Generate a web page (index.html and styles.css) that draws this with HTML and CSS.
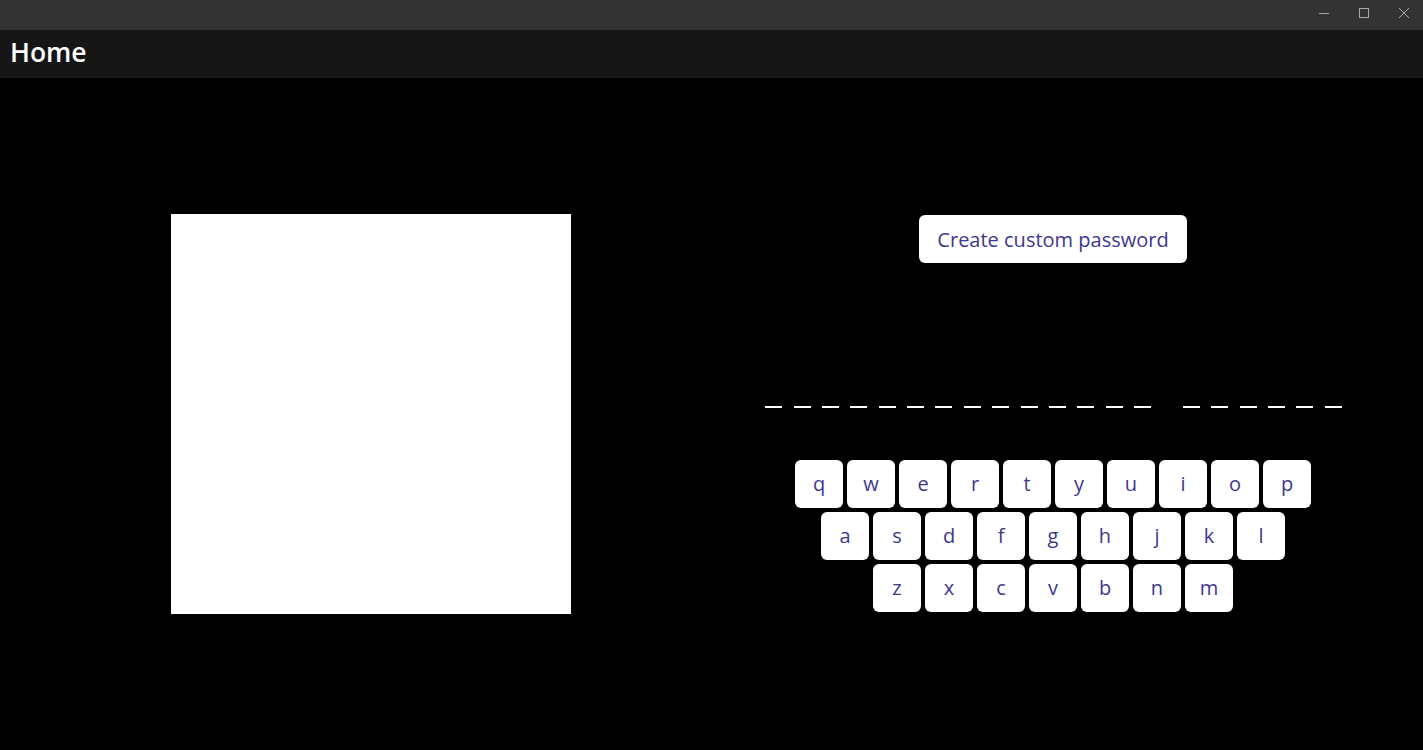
FILE: index.html
```html
<!DOCTYPE html>
<html>
<head>
<meta charset="utf-8">
<link rel="stylesheet" href="styles.css">
</head>
<body>
<div class="titlebar">
  <div class="controls">
    <span class="ctl"><svg width="12" height="12" viewBox="0 0 12 12"><path d="M1 6.5h10" stroke="#a8a8a8" stroke-width="1"/></svg></span>
    <span class="ctl"><svg width="12" height="12" viewBox="0 0 12 12"><rect x="1.5" y="1.5" width="9" height="9" fill="none" stroke="#a8a8a8" stroke-width="1"/></svg></span>
    <span class="ctl"><svg width="12" height="12" viewBox="0 0 12 12"><path d="M1 1l10 10M11 1L1 11" stroke="#a8a8a8" stroke-width="1"/></svg></span>
  </div>
</div>
<header class="header"><h1 class="title">Home</h1></header>
<main class="main">
  <section class="left">
    <div class="canvas"></div>
  </section>
  <section class="right">
    <button class="create">Create custom password</button>
    <div class="dashes">
      <div class="group">
        <span class="dash"></span><span class="dash"></span><span class="dash"></span><span class="dash"></span><span class="dash"></span><span class="dash"></span><span class="dash"></span><span class="dash"></span><span class="dash"></span><span class="dash"></span><span class="dash"></span><span class="dash"></span><span class="dash"></span><span class="dash"></span>
      </div>
      <div class="group">
        <span class="dash"></span><span class="dash"></span><span class="dash"></span><span class="dash"></span><span class="dash"></span><span class="dash"></span>
      </div>
    </div>
    <div class="keyboard">
      <div class="row">
        <button class="key">q</button><button class="key">w</button><button class="key">e</button><button class="key">r</button><button class="key">t</button><button class="key">y</button><button class="key">u</button><button class="key">i</button><button class="key">o</button><button class="key">p</button>
      </div>
      <div class="row">
        <button class="key">a</button><button class="key">s</button><button class="key">d</button><button class="key">f</button><button class="key">g</button><button class="key">h</button><button class="key">j</button><button class="key">k</button><button class="key">l</button>
      </div>
      <div class="row">
        <button class="key">z</button><button class="key">x</button><button class="key">c</button><button class="key">v</button><button class="key">b</button><button class="key">n</button><button class="key">m</button>
      </div>
    </div>
  </section>
</main>
</body>
</html>
```
FILE: styles.css
```css
* { box-sizing: border-box; }
html, body { margin: 0; padding: 0; }
body {
  background: #000;
  font-family: "Open Sans", "Liberation Sans", sans-serif;
  width: 1423px;
  height: 750px;
  overflow: hidden;
}
.titlebar {
  height: 30px;
  background: #333333;
  display: flex;
  justify-content: flex-end;
}
.controls {
  display: flex;
  margin-right: -1px;
}
.ctl {
  width: 40px;
  height: 26px;
  display: flex;
  align-items: center;
  justify-content: center;
}
.header {
  height: 48px;
  background: #161616;
  display: flex;
  align-items: center;
  padding-left: 10px;
}
.title {
  margin: 0;
  color: #fff;
  font-size: 26.5px;
  font-weight: 600;
  line-height: 1;
  padding-bottom: 4px;
}
.main {
  height: 672px;
  display: grid;
  grid-template-columns: 742px 622px;
}
.left {
  display: flex;
  align-items: center;
  justify-content: center;
}
.canvas {
  width: 400px;
  height: 400px;
  background: #fff;
}
.right {
  display: flex;
  flex-direction: column;
  align-items: center;
  justify-content: center;
  padding-bottom: 2px;
}
.create {
  height: 48px;
  padding: 2px 18px 0;
  border: none;
  border-radius: 6px;
  background: #fff;
  color: #3e3790;
  font-family: "Open Sans", sans-serif;
  font-size: 20px;
  line-height: 1;
  cursor: pointer;
}
.dashes {
  display: flex;
  gap: 32px;
  margin-top: 143px;
  margin-left: 1px;
}
.group {
  display: flex;
  gap: 11.35px;
}
.dash {
  display: block;
  width: 17px;
  height: 2px;
  background: #fff;
}
.keyboard {
  margin-top: 52px;
  display: flex;
  flex-direction: column;
  align-items: center;
  gap: 4px;
}
.row {
  display: flex;
  gap: 4px;
}
.key {
  width: 48px;
  height: 48px;
  border: none;
  border-radius: 6px;
  background: #fff;
  color: #3e3790;
  font-family: "Open Sans", sans-serif;
  font-size: 20px;
  line-height: 1;
  padding: 0;
  cursor: pointer;
}
```
